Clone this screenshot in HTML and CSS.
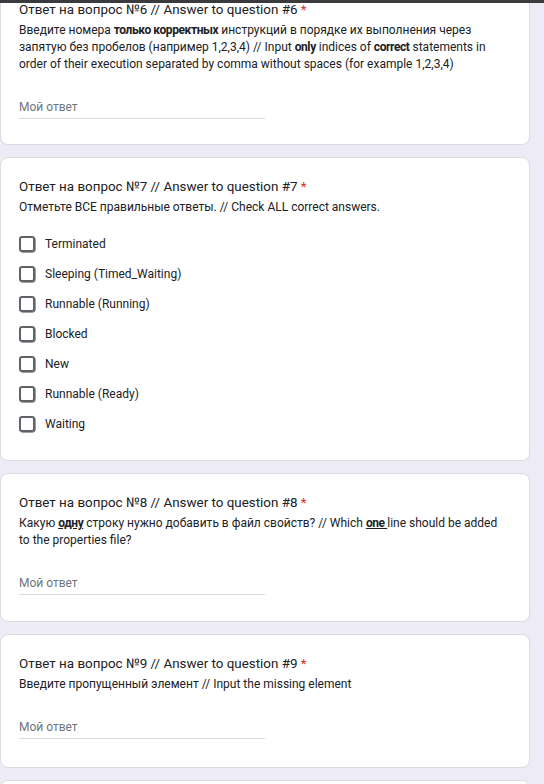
FILE: index.html
```html
<!DOCTYPE html>
<html lang="ru">
<head>
<meta charset="utf-8">
<title>Form</title>
<link rel="stylesheet" href="styles.css">
</head>
<body>
<div class="topbar"></div>
<main class="page">
  <section class="card card-cut">
    <div class="title">Ответ на вопрос №6 // Answer to question #6 <span class="req">*</span></div>
    <div class="desc">Введите номера <b>только корректных</b> инструкций в порядке их выполнения через запятую без пробелов (например 1,2,3,4) // Input <b>only</b> indices of <b>correct</b> statements in order of their execution separated by comma without spaces (for example 1,2,3,4)</div>
    <div class="answer">Мой ответ</div>
  </section>

  <section class="card card-options">
    <div class="title">Ответ на вопрос №7 // Answer to question #7 <span class="req">*</span></div>
    <div class="desc">Отметьте ВСЕ правильные ответы. // Check ALL correct answers.</div>
    <ul class="options">
      <li class="option"><span class="box"></span><span>Terminated</span></li>
      <li class="option"><span class="box"></span><span>Sleeping (Timed_Waiting)</span></li>
      <li class="option"><span class="box"></span><span>Runnable (Running)</span></li>
      <li class="option"><span class="box"></span><span>Blocked</span></li>
      <li class="option"><span class="box"></span><span>New</span></li>
      <li class="option"><span class="box"></span><span>Runnable (Ready)</span></li>
      <li class="option"><span class="box"></span><span>Waiting</span></li>
    </ul>
  </section>

  <section class="card">
    <div class="title">Ответ на вопрос №8 // Answer to question #8 <span class="req">*</span></div>
    <div class="desc">Какую <b class="u">одну</b> строку нужно добавить в файл свойств? // Which <b class="u">one </b>line should be added to the properties file?</div>
    <div class="answer">Мой ответ</div>
  </section>

  <section class="card card-short">
    <div class="title">Ответ на вопрос №9 // Answer to question #9 <span class="req">*</span></div>
    <div class="desc">Введите пропущенный элемент // Input the missing element</div>
    <div class="answer">Мой ответ</div>
  </section>

  <section class="card card-next"></section>
</main>
</body>
</html>
```

FILE: styles.css
```css
* { box-sizing: border-box; }
html, body {
  margin: 0;
  padding: 0;
  background: #ecebf6;
  font-family: Roboto, "Noto Sans", Arial, sans-serif;
  color: #202124;
  overflow: hidden;
}
.topbar {
  position: fixed;
  top: 0;
  left: 0;
  right: 0;
  height: 3px;
  background: #3a3b3f;
  z-index: 2;
}
.page {
  display: flex;
  flex-direction: column;
  gap: 12px;
  width: 530px;
}
.card {
  background: #fff;
  border: 1px solid #dadce0;
  border-radius: 8px;
  padding: 19px 18px 26px 18px;
}
.card-cut {
  border-top: none;
  border-top-left-radius: 0;
  border-top-right-radius: 0;
  padding-top: 0;
  padding-bottom: 25px;
}
.card-options {
  padding-bottom: 21px;
}
.card-short {
  padding-bottom: 28px;
}
.card-next {
  height: 40px;
  padding: 0;
}
.title {
  font-size: 13.4px;
  line-height: 20px;
}
.req { color: #d93025; }
.desc {
  font-size: 12px;
  line-height: 17px;
  margin-top: 2px;
  padding-right: 10px;
}
.desc b {
  font-weight: 700;
  letter-spacing: -0.4px;
}
.desc .u { text-decoration: underline; }
.answer {
  margin-top: 24px;
  width: 246px;
  font-size: 12px;
  line-height: 20px;
  color: #70757a;
  padding-bottom: 1px;
  border-bottom: 1px solid #dadce0;
}
.options {
  list-style: none;
  margin: 13px 0 0 0;
  padding: 0;
}
.option {
  display: flex;
  align-items: center;
  gap: 10px;
  height: 30px;
  font-size: 12px;
}
.box {
  width: 16px;
  height: 16px;
  border: 2px solid #5f6368;
  border-radius: 3px;
  box-shadow: 0.5px 0.5px 0 #3c4043;
}
```
